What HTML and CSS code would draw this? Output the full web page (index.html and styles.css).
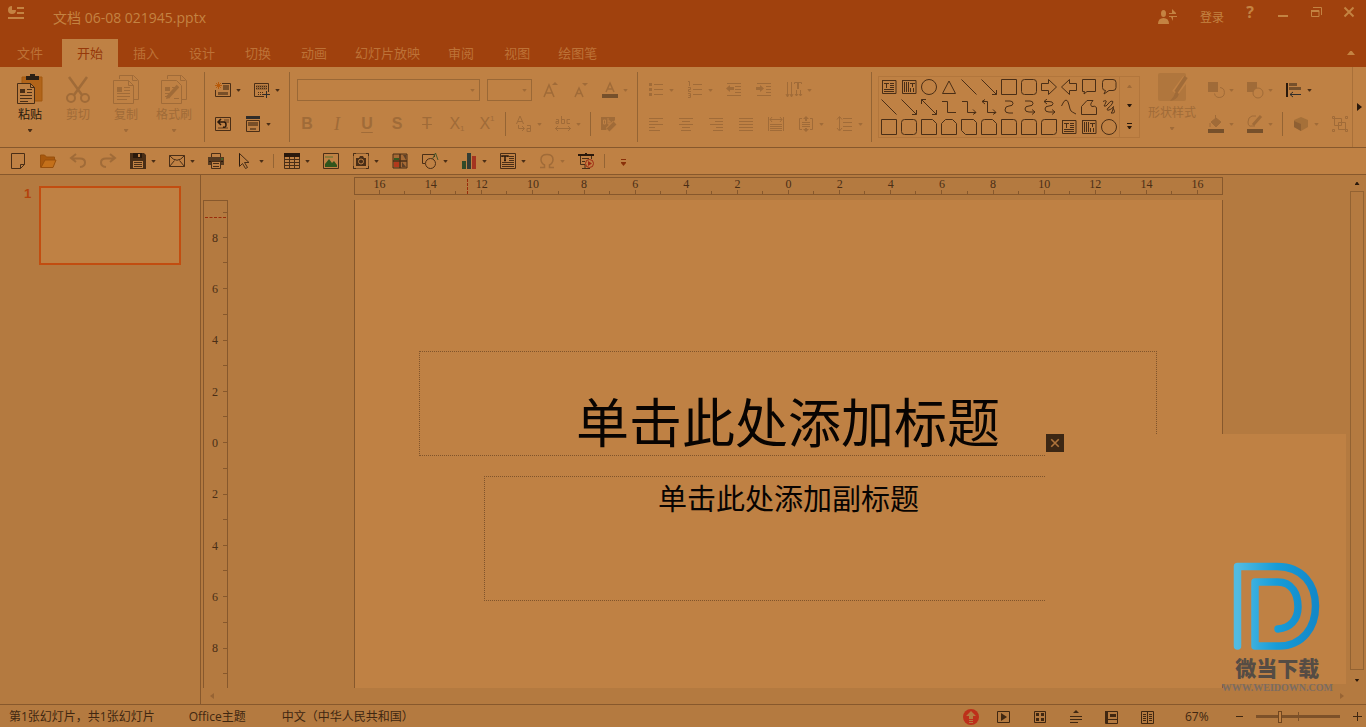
FILE: index.html
```html
<!DOCTYPE html>
<html lang="zh-CN">
<head>
<meta charset="utf-8">
<title>文档 06-08 021945.pptx</title>
<meta name="viewport" content="width=device-width, initial-scale=1">
<link rel="stylesheet" href="styles.css">
</head>
<body>
<svg class="sprite" aria-hidden="true">
  <defs>
    <linearGradient id="brand" x1="0" x2="1" y1="0" y2="0"><stop offset="0" stop-color="#52bbe2"/><stop offset=".5" stop-color="#169cd8"/><stop offset="1" stop-color="#1388c8"/></linearGradient>
  </defs>
  <g>
    <!-- clipboard -->
    <symbol id="paste" viewBox="0 0 28 32"><path d="M6 3h20v24H6z" fill="#b26419" stroke="#a3590f"/><path d="M10 2h4V0h5v2h4v4H10z" fill="#2c2015" stroke="none"/><path d="M1.500 9.500h13l4 4v16h-17z" fill="#bf8144"/><path d="M14.500 9.500v4h4" /><path d="M4 15h5v4H4z" fill="currentColor" stroke="none"/><path d="M11 15.500h5M11 18.500h5M4 21.500h12M4 24.500h12M4 27.500h8"/></symbol>
    <symbol id="cut" viewBox="0 0 28 32"><path d="M5 3l13 18M23 3L10 21" stroke-width="2.500"/><circle cx="7" cy="24" r="4" stroke-width="2"/><circle cx="21" cy="24" r="4" stroke-width="2"/></symbol>
    <symbol id="copy" viewBox="0 0 28 32"><path d="M7.500 5V1.500h14l5 5v19H22M20.500 1.500v5h5"/><path d="M1.500 6.500h15l5 5v18h-20zM16.500 6.500v5h5"/><path d="M5 13h5v5H5z" fill="currentColor" stroke="none"/><path d="M12 13.500h6M12 16.500h6M5 19.500h13M5 22.500h13M5 25.500h10"/></symbol>
    <symbol id="brush" viewBox="0 0 28 32"><path d="M7.500 5V1.500h14l5 5v19H22M20.500 1.500v5h5"/><path d="M1.500 6.500h15l5 5v18h-20z"/><path d="M5 13h5v4H5z" fill="currentColor" stroke="none"/><path d="M5 19.500h4M5 22.500h4M14 24.500h5M12 13.500h3"/><path d="M18 12L8 23" stroke-width="3.500"/><path d="M6 25l1-4 3 3z" fill="currentColor" stroke="none"/></symbol>
    <!-- slides -->
    <symbol id="newslide" viewBox="0 0 18 18"><path d="M8 2.500h8.500v13h-15V9"/><path d="M9 4h6v5H9zM4 11h10v3H4z" fill="currentColor" stroke="none" opacity=".6"/><path d="M4.500 1v7M1 4.500h7M2 2l5 5M7 2L2 7" stroke="#b85a0a"/></symbol>
    <symbol id="layout" viewBox="0 0 18 18"><path d="M11 15.500H1.500v-13h14V11"/><path d="M3 5.500h11M3 7.500h11" stroke-dasharray="1 1"/><path d="M5 11.500h5M5 13.500h5" stroke-dasharray="1 1"/><path d="M3 4h11v5H3z" fill="currentColor" stroke="none" opacity=".3"/><path d="M13.500 10v7M10 13.500h7" stroke="#302d2a"/></symbol>
    <symbol id="reset" viewBox="0 0 18 18"><path d="M1.500 2.500h15v13h-15z"/><path d="M10 4h5v4h-5zM4 12h10v2H4z" fill="currentColor" stroke="none" opacity=".4"/><path d="M7 4L4 7l3 3M4 7h6q2 0 2 3t-3 2" stroke="#2a190c" stroke-width="1.500"/></symbol>
    <symbol id="section" viewBox="0 0 18 18"><path d="M2 1h14v3H2z" fill="#302d2a" stroke="none"/><path d="M2.500 5.500h13v11h-13z"/><path d="M4 7h10v4H4zM6 13h6v2H6z" fill="currentColor" stroke="none" opacity=".6"/></symbol>
    <!-- font -->
    <symbol id="grow" viewBox="0 0 18 18"><path d="M3 16L8 4l5 12M5 12h6" stroke-width="1.500"/><path d="M11 4l3-3 3 3z" fill="currentColor" stroke="none"/></symbol>
    <symbol id="shrink" viewBox="0 0 18 18"><path d="M4 16l4-9 4 9M5.500 12.500h5" stroke-width="1.500"/><path d="M11 2l3 3 3-3z" fill="currentColor" stroke="none"/></symbol>
    <symbol id="color" viewBox="0 0 18 18"><path d="M5 11l4-9 4 9M6.500 8h5" stroke-width="1.500"/><path d="M1 13h16v4H1z" fill="#76502b" stroke="none"/></symbol>
    <symbol id="case" viewBox="0 0 18 18"><path d="M1.500 9L5 1l3.500 8M3 6.500h4M3.500 10v3.500H9M7 11l2.500 2.500L7 16"/><path d="M12 10.500h3.500v6H12v-3h3.500"/></symbol>
    <symbol id="clear" viewBox="0 0 18 18"><path d="M1 2h14v3l-9 10H1z" fill="currentColor" stroke="none"/><path d="M3.500 5h2v4h-2zM8 3v6h2V6H8" stroke="#bf8144"/><path d="M15 8L8 15" stroke="#bf8144" stroke-width="6"/><path d="M15 8L8 15" stroke-width="4"/></symbol>
    <symbol id="spacing" viewBox="0 0 18 18"><path d="M2 4.500h2.500v4H2v-2h2.500M7.500 1v7.500h3v-4h-3M16 4.500h-3v4h3M1 13.500h16M4 11l-2.500 2.500L4 16M14 11l2.500 2.500L14 16"/></symbol>
    <!-- paragraph -->
    <symbol id="bullets" viewBox="0 0 18 18"><path d="M7 3.500h9M7 8.500h9M7 13.500h9"/><path d="M2 2h3v3H2zM2 7h3v3H2zM2 12h3v3H2z" fill="currentColor" stroke="none"/></symbol>
    <symbol id="numbers" viewBox="0 0 18 18"><path d="M7 3.500h9M7 8.500h9M7 13.500h9M2 .500h1.500V5M2 6.500h2.500v2H2.500v2H5M2 12.500h2.500v4H2M2.500 14.500h2"/></symbol>
    <symbol id="outdent" viewBox="0 0 18 18"><path d="M2 2.500h14M10 5.500h6M10 8.500h6M10 11.500h6M2 14.500h14"/><path d="M1 7.500L5 4v2h4v3H5v2z" fill="currentColor" stroke="none"/></symbol>
    <symbol id="indent" viewBox="0 0 18 18"><path d="M2 2.500h14M11 5.500h5M11 8.500h5M11 11.500h5M2 14.500h14"/><path d="M9 7.500L5 4v2H1v3h4v2z" fill="currentColor" stroke="none"/></symbol>
    <symbol id="direction" viewBox="0 0 18 18"><path d="M2.500 1v14M6.500 1v14M1 13l1.500 3L4 13M5 13l1.500 3L8 13M9.500 3V1.500h7V3M11.500 9v6M15.500 9v6M10 13l1.500 2 1.500-2M14 13l1.500 2 1.500-2"/><path d="M13 1v7" stroke-width="2"/></symbol>
    <symbol id="aleft" viewBox="0 0 18 18"><path d="M2 3.500h14M2 6.500h9M2 9.500h14M2 12.500h6M2 15.500h11"/></symbol>
    <symbol id="acenter" viewBox="0 0 18 18"><path d="M2 3.500h14M5 6.500h8M2 9.500h14M5 12.500h8M4 15.500h10"/></symbol>
    <symbol id="aright" viewBox="0 0 18 18"><path d="M2 3.500h14M8 6.500h8M3 9.500h13M9 12.500h7M6 15.500h10"/></symbol>
    <symbol id="ajust" viewBox="0 0 18 18"><path d="M2 3.500h14M2 6.500h14M2 9.500h14M2 12.500h14M2 15.500h14"/></symbol>
    <symbol id="adist" viewBox="0 0 18 18"><path d="M1.500 2v14M16.500 2v14M3 4.500h12M5 2L3 4.500 5 7M13 2l2 2.500L13 7M3 9.500h12M3 11.500h12M3 13.500h12M3 15.500h12"/></symbol>
    <symbol id="valign" viewBox="0 0 18 18"><path d="M5 3.500H2.500v11H5M13 3.500h2.500v11H13M5 7.500h8M5 9.500h8M5 11.500h8"/><path d="M9 1L6 4h2v2h2V4h2zM9 17l-3-3h2v-1h2v1h2z" fill="currentColor" stroke="none"/></symbol>
    <symbol id="linesp" viewBox="0 0 18 18"><path d="M3.500 2v13M1 4.500l2.500-3 2.500 3M1 13l2.500 3L6 13M7 3.500h9M7 7.500h9M7 11.500h9M7 15.500h9"/></symbol>
    <!-- shapes -->
    <symbol id="s-text" viewBox="0 0 16 16"><path d="M1 1.500h14v13H1.500v-13M3 4.500h5M5.500 4v5M9 4.500h4M9 6.500h4M9 8.500h4M3 10.500h10M3 12.500h10"/></symbol>
    <symbol id="s-vtext" viewBox="0 0 16 16"><path d="M1 1.500h14v13H1.500v-13M3.500 3v10M5.500 3v10M7.500 3v10M9 4.500h5M11.500 4v4M9.500 9v4M12.500 9v4"/></symbol>
    <symbol id="s-circle" viewBox="0 0 16 16"><circle cx="8" cy="8" r="7.500"/></symbol>
    <symbol id="s-tri" viewBox="0 0 16 16"><path d="M8 2l6.500 12.500h-13z"/></symbol>
    <symbol id="s-line" viewBox="0 0 16 16"><path d="M.500.500l15 15"/></symbol>
    <symbol id="s-arrow" viewBox="0 0 16 16"><path d="M.500.500l15 15M11 15.500h4.500V11"/></symbol>
    <symbol id="s-darrow" viewBox="0 0 16 16"><path d="M.500.500l15 15M11 15.500h4.500V11M.500 5V.500H5"/></symbol>
    <symbol id="s-rect" viewBox="0 0 16 16"><path d="M.500.500h15v15H.500z"/></symbol>
    <symbol id="s-round" viewBox="0 0 16 16"><rect x=".5" y=".5" width="15" height="15" rx="3"/></symbol>
    <symbol id="s-right" viewBox="0 0 16 16"><path d="M.500 4.500h7v-4l8 7.500-8 7.500v-4h-7z"/></symbol>
    <symbol id="s-left" viewBox="0 0 16 16"><path d="M15.500 4.500h-7v-4L.500 8l8 7.500v-4h7z"/></symbol>
    <symbol id="s-call" viewBox="0 0 16 16"><path d="M1.500.500h13v12H6L3 15l.500-2.500h-2z"/></symbol>
    <symbol id="s-rcall" viewBox="0 0 16 16"><path d="M4 .500h8q3 0 3 3v5q0 3-3 3H8L3 15l1.500-3.500q-3 0-3-3v-5q0-3 2.500-3z"/></symbol>
    <symbol id="s-elbow" viewBox="0 0 16 16"><path d="M1 2.500h5.500v11H15"/></symbol>
    <symbol id="s-elbowa" viewBox="0 0 16 16"><path d="M1 2.500h5.500v11H15M12 10.500l3 3-3 2"/></symbol>
    <symbol id="s-elbowd" viewBox="0 0 16 16"><path d="M1 2.500h5.500v11H15M12 10.500l3 3-3 2M4 .500l-3 2 3 2.500"/></symbol>
    <symbol id="s-curve" viewBox="0 0 16 16"><path d="M4 2h5q3 0 3 2.500Q12 7 8 7T4 11q0 3 4 3h4"/></symbol>
    <symbol id="s-curvea" viewBox="0 0 16 16"><path d="M4 2h5q3 0 3 2.500Q12 7 8 7T4 10q0 3 4 3h6M11 10.500l3 2.500-3 2.500"/></symbol>
    <symbol id="s-curved" viewBox="0 0 16 16"><path d="M3 2.500h5q4 0 4 2Q12 7 8 7T4 10q0 3 4 3h6M11 10.500l3 2.500-3 2.500M6 0L3 2.500 6 5"/></symbol>
    <symbol id="s-wave" viewBox="0 0 16 16"><path d="M.500 7Q3 1 5 1t3 5 2 6 5 3"/></symbol>
    <symbol id="s-free" viewBox="0 0 16 16"><path d="M.500 15.500v-8L6 1.500h6Q8 6 11 7.500q3-1 4.500 1v7z"/></symbol>
    <symbol id="s-scrib" viewBox="0 0 16 16"><path d="M2 2.500q4-2 3 .500T3 7q2 1 4-2t4-3 0 3-4 4q-2 3 1 2t4-3 0 2-2 4 2 0 0-5"/></symbol>
    <symbol id="s-snip" viewBox="0 0 16 16"><path d="M.500.500h11l4 4v11H.500z"/></symbol>
    <symbol id="s-snip2" viewBox="0 0 16 16"><path d="M4.500.500h7l4 4v11H.500v-11z"/></symbol>
    <symbol id="s-diag" viewBox="0 0 16 16"><path d="M.500.500h12l3 3v12h-11l-4-4z"/></symbol>
    <symbol id="s-rsnip" viewBox="0 0 16 16"><path d="M3.500.500h8l4 4v11H.500v-12q0-3 3-3z"/></symbol>
    <symbol id="s-r1" viewBox="0 0 16 16"><path d="M.500.500h12q3 0 3 3v12H.500z"/></symbol>
    <symbol id="s-r2" viewBox="0 0 16 16"><path d="M3.500.500h9q3 0 3 3v12H.500v-12q0-3 3-3z"/></symbol>
    <symbol id="s-rd" viewBox="0 0 16 16"><path d="M3.500.500h12v12q0 3-3 3H.500v-12q0-3 3-3z"/></symbol>
    <!-- drawing -->
    <symbol id="style" viewBox="0 0 32 32"><rect x="2" y="1" width="28" height="28" rx="2" fill="#b0763d" stroke="none"/><path d="M30 6L19 21" stroke="#bf8144" stroke-width="7"/><path d="M30 5L20 20" stroke-width="4"/><path d="M20 19l3 3q-2 6-9 7 4-4 6-10z" fill="currentColor" stroke="none"/></symbol>
    <symbol id="union" viewBox="0 0 18 18"><path d="M1 1h10v10H1z" fill="currentColor" stroke="none"/><path d="M13 6.500a5 5 0 1 1-5.500 6"/></symbol>
    <symbol id="combine" viewBox="0 0 18 18"><path d="M1 1h10v10H1z" fill="currentColor" stroke="none"/><circle cx="12" cy="12" r="5" fill="#bf8144"/></symbol>
    <symbol id="align" viewBox="0 0 18 18"><path d="M4 2h8v3H4zM4 6h12v3H4z" fill="#76502b" stroke="none"/><path d="M2 2v14" stroke="#2a190c" stroke-width="2"/><path d="M5 13.500h11M8 11l-3 2.500L8 16" stroke="#302d2a"/></symbol>
    <symbol id="fill" viewBox="0 0 18 18"><path d="M4 7l5-4 5 4-5 5z" fill="currentColor"/><path d="M8.500 0v6M3 8v4" /><path d="M1 14h16v4H1z" fill="#76502b" stroke="none"/></symbol>
    <symbol id="outline" viewBox="0 0 18 18"><path d="M10 1H6Q2 2 2 7t4 4h3"/><path d="M15 1L7 10" stroke-width="3"/><path d="M1 14h16v4H1z" fill="#76502b" stroke="none"/></symbol>
    <symbol id="cube" viewBox="0 0 18 18"><path d="M2 5l7-3 7 3v7l-7 4-7-4z" fill="#a57039" stroke="none"/><path d="M2 6l7 3v7l-7-4z" fill="#8f6033" stroke="none"/></symbol>
    <symbol id="group" viewBox="0 0 18 18"><path d="M1.500 1.500h2v2h-2zM14.500 1.500h2v2h-2zM1.500 14.500h2v2h-2zM14.500 14.500h2v2h-2zM3.500 3.500h7v7h-7zM7.500 7.500h7v7h-7z"/></symbol>
    <!-- quick access -->
    <symbol id="new" viewBox="0 0 18 18"><path d="M2.500 1.500h13v11l-4 4h-9zM11.500 16.500v-4h4"/></symbol>
    <symbol id="open" viewBox="0 0 18 18"><path d="M1.500 15.500V3h4l2 2h8v3" fill="#a9590e" stroke="#99500c"/><path d="M2 15.500L6 8h11l-3 7.500z" fill="#c4701a" stroke="#99500c"/></symbol>
    <symbol id="undo" viewBox="0 0 18 18"><path d="M7 2L2 6l5 4M2 6.500h9q5 0 5 4T11 15" stroke-width="2"/></symbol>
    <symbol id="redo" viewBox="0 0 18 18"><path d="M11 2l5 4-5 4M16 6.500H7q-5 0-5 4T7 15" stroke-width="2"/></symbol>
    <symbol id="save" viewBox="0 0 18 18"><path d="M1 1h14l2 2v14H1z" fill="#4a2e16" stroke="none"/><path d="M4 1h9v5H4z" fill="#2a190c" stroke="none"/><path d="M9 2h2v3H9zM4 9h10v7H4z" fill="#bf8144" stroke="none"/><path d="M5 10.500h8M5 12.500h8M5 14.500h8"/></symbol>
    <symbol id="mail" viewBox="0 0 18 18"><path d="M1.500 3.500h15v11h-15zM1.500 3.500Q9 13 16.500 3.500M1.500 14.500l5-6M16.500 14.500l-5-6"/></symbol>
    <symbol id="print" viewBox="0 0 18 18"><path d="M4.500 5V1.500h9V5"/><path d="M1 5h16v8H1z" fill="#563a20" stroke="none"/><path d="M2 9h14v1H2z" fill="#2a190c" stroke="none"/><path d="M14 6h2v2h-2z" fill="#446024" stroke="none"/><path d="M4.500 9.500h9v7h-9z" fill="#bf8144"/><path d="M6 11.500h6M6 14.500h6"/></symbol>
    <symbol id="cursor" viewBox="0 0 18 18"><path d="M2.500 1.500v13l3-3 3 5 2-1-3-5h4.500z"/><path d="M2.500 1.500v12" stroke="#2a190c"/></symbol>
    <symbol id="table" viewBox="0 0 18 18"><path d="M1.500 1.500h15v15h-15zM6.500 4v12M11.500 4v12M2 7.500h14M2 10.500h14M2 13.500h14"/><path d="M1 1h16v4H1z" fill="#2a190c" stroke="none"/></symbol>
    <symbol id="picture" viewBox="0 0 18 18"><path d="M1.500 1.500h15v15h-15z"/><path d="M3 4h8v2H3z" fill="#8b7a3a" stroke="none"/><path d="M3 15v-3l4-5 3 4 2-2 3 4v2z" fill="#30551c" stroke="none"/></symbol>
    <symbol id="camera" viewBox="0 0 18 18"><path d="M1.500 1.500h15v15h-15z" stroke-dasharray="1 1"/><path d="M1.500 4V1.500H4M14 1.500h2.500V4M16.500 14v2.500H14M4 16.500H1.500V14"/><path d="M4 6h3l1-2h3l1 2h2v8H4z" fill="currentColor" stroke="none"/><circle cx="9" cy="9.500" r="2.500" stroke="#bf8144"/></symbol>
    <symbol id="gallery" viewBox="0 0 18 18"><path d="M2 2h14v14H2z" fill="#a66a35"/><path d="M3 6h5v2H3z" fill="#365a20" stroke="none"/><path d="M3 10h5v5H3z" fill="#b33a1c" stroke="none"/><path d="M11 10l4 5h-4zM12 3h3v5z" fill="#5f4027" stroke="none"/><path d="M9 2v14M2 9h14" stroke-width="1.500"/></symbol>
    <symbol id="shapes" viewBox="0 0 18 18"><path d="M4 11.500H1.500v-9h12V5" /><path d="M11 8l3.500-7L17 8" stroke="#45562a"/><circle cx="9.500" cy="11.500" r="5" fill="#bf8144"/></symbol>
    <symbol id="chart" viewBox="0 0 18 18"><path d="M2 9h4v8H2z" fill="#324a28" stroke="none"/><path d="M7 1h4v16H7z" fill="#343e35" stroke="none"/><path d="M12 4h4v13h-4z" fill="#a43420" stroke="none"/></symbol>
    <symbol id="textbox" viewBox="0 0 18 18"><path d="M1.500 1.500h15v15h-15zM10 4.500h5M10 6.500h5M10 8.500h5M3 10.500h12M3 12.500h12M3 14.500h12"/><path d="M3 5V4h6v1M6 4v5M5 8.500h2" stroke="#2a190c" stroke-width="1.500"/></symbol>
    <symbol id="omega" viewBox="0 0 18 18"><path d="M2 15.500h4.500V13Q3 11 3 7.500 3 2.500 9 2.500t6 5Q15 11 11.500 13v2.500H16" stroke-width="1.500"/></symbol>
    <symbol id="present" viewBox="0 0 18 18"><path d="M1 2h16v2H1zM8 1h2v1H8z" fill="#2a190c" stroke="none"/><path d="M3.500 4v8.500H8M14.500 4v3M5 6.500h7M5 9.500h3M8 13v3M5 16.500h8"/><circle cx="12.500" cy="11.500" r="4" stroke="#a02a12"/><path d="M11 9l4 2.500-4 2.500z" fill="#a02a12" stroke="none"/></symbol>
    <symbol id="more" viewBox="0 0 18 18"><path d="M7 7.500h5" stroke="#8a3008"/><path d="M7 10h5v1l-2.500 3L7 11z" fill="#8a3008" stroke="none"/></symbol>
    <!-- title bar -->
    <symbol id="applogo" viewBox="0 0 18 18"><path d="M5 1a4 4 0 1 0 4 4H5z" fill="currentColor" stroke="none"/><path d="M10 3h7M10 8h7M1 13h16" stroke-width="2"/></symbol>
    <symbol id="users" viewBox="0 0 20 18"><ellipse cx="6.500" cy="5.500" rx="2.500" ry="3.500" fill="currentColor" stroke="none"/><path d="M1 16q0-6 5.500-6t5.500 6z" fill="currentColor" stroke="none"/><path d="M12 5h3V1l4 4v1h-7zM20 8h-8v1h2l2 4V9h4z" fill="currentColor" stroke="none"/></symbol>
    <symbol id="min" viewBox="0 0 12 12"><path d="M1 10h10" stroke-width="2"/></symbol>
    <symbol id="restore" viewBox="0 0 12 12"><path d="M3 1.500h8.500V9M1 4.500h8v6H1.500V4M1 5.500h8"/></symbol>
    <symbol id="close" viewBox="0 0 12 12"><path d="M1.500 1.500l9 9M10.500 1.500l-9 9" stroke-width="2"/></symbol>
    <!-- status bar -->
    <symbol id="update" viewBox="0 0 18 18"><circle cx="9" cy="9" r="8" fill="#bd301a" stroke="none"/><path d="M9 3l5 5h-3v3H7V8H4zM7 12h4v1H7zM7 14h4v1H7z" fill="#b47a40" stroke="none"/></symbol>
    <symbol id="play" viewBox="0 0 18 18"><path d="M2.500 3.500h12v11h-12z"/><path d="M6 5l6 4-6 4z" fill="currentColor" stroke="none"/></symbol>
    <symbol id="grid" viewBox="0 0 18 18"><path d="M3.500 3.500h11v11h-11z"/><path d="M5 5h3v3H5zM10 5h3v3h-3zM5 10h3v3H5zM10 10h3v3h-3z" fill="currentColor" stroke="none"/></symbol>
    <symbol id="notes" viewBox="0 0 18 18"><path d="M9 2l3 3H6z" fill="currentColor" stroke="none"/><path d="M3 8.500h12M3 11.500h12M3 14.500h8"/></symbol>
    <symbol id="normal" viewBox="0 0 18 18"><path d="M2.500 3.500h12v12h-12zM5 11.500h9"/><path d="M2 3h3v12H2zM7 6h6v3H7z" fill="currentColor" stroke="none"/></symbol>
    <symbol id="read" viewBox="0 0 18 18"><path d="M2.500 3.500h12v12h-12zM8.500 3v12M4 6.500h3M4 8.500h3M4 10.500h3M4 12.500h3M10 6.500h3M10 8.500h3M10 10.500h3M10 12.500h3"/></symbol>
  </g>
</svg>

<div class="app">
  <header class="titlebar">
    <svg class="ico"><use href="#applogo"/></svg>
    <h1 class="doc-title">文档 06-08 021945.pptx</h1>
    <div class="account">
      <button aria-label="切换用户"><svg class="ico wide"><use href="#users"/></svg></button>
      <button class="login">登录</button>
    </div>
    <div class="window-controls">
      <button class="help" aria-label="帮助">?</button>
      <button aria-label="最小化"><svg class="ctl"><use href="#min"/></svg></button>
      <button aria-label="还原"><svg class="ctl"><use href="#restore"/></svg></button>
      <button aria-label="关闭"><svg class="ctl"><use href="#close"/></svg></button>
    </div>
  </header>

  <nav class="tabs">
    <button class="tab file">文件</button>
    <button class="tab active">开始</button>
    <button class="tab">插入</button>
    <button class="tab">设计</button>
    <button class="tab">切换</button>
    <button class="tab">动画</button>
    <button class="tab long">幻灯片放映</button>
    <button class="tab">审阅</button>
    <button class="tab">视图</button>
    <button class="tab long">绘图笔</button>
    <button class="collapse" aria-label="折叠功能区"><i class="caret up"></i></button>
  </nav>

  <section class="ribbon">
    <div class="group clipboard">
      <button class="big on"><svg><use href="#paste"/></svg><span>粘贴</span><i class="caret"></i></button>
      <button class="big"><svg><use href="#cut"/></svg><span>剪切</span></button>
      <button class="big"><svg><use href="#copy"/></svg><span>复制</span><i class="caret"></i></button>
      <button class="big"><svg><use href="#brush"/></svg><span>格式刷</span><i class="caret"></i></button>
    </div>
    <div class="group rows on">
      <div class="row">
        <button class="tool" aria-label="新建幻灯片"><svg class="ico"><use href="#newslide"/></svg><i class="caret"></i></button>
        <button class="tool" aria-label="版式"><svg class="ico"><use href="#layout"/></svg><i class="caret"></i></button>
      </div>
      <div class="row">
        <button class="tool" aria-label="重置"><svg class="ico"><use href="#reset"/></svg></button>
        <button class="tool" aria-label="节"><svg class="ico"><use href="#section"/></svg><i class="caret"></i></button>
      </div>
    </div>
    <div class="group rows font">
      <div class="row">
        <div class="combos">
          <button class="combo face" aria-label="字体"><i class="caret"></i></button>
          <button class="combo size" aria-label="字号"><i class="caret"></i></button>
        </div>
        <button class="tool" aria-label="增大字号"><svg class="ico"><use href="#grow"/></svg></button>
        <button class="tool" aria-label="减小字号"><svg class="ico"><use href="#shrink"/></svg></button>
        <button class="tool" aria-label="字体颜色"><svg class="ico"><use href="#color"/></svg><i class="caret"></i></button>
      </div>
      <div class="row">
        <button class="tool glyph b">B</button>
        <button class="tool glyph i">I</button>
        <button class="tool glyph u">U</button>
        <button class="tool glyph b">S</button>
        <button class="tool glyph s">T</button>
        <button class="tool glyph">X<sub>1</sub></button>
        <button class="tool glyph">X<sup>1</sup></button>
        <i class="sep"></i>
        <button class="tool" aria-label="更改大小写"><svg class="ico"><use href="#case"/></svg><i class="caret"></i></button>
        <button class="tool" aria-label="字符间距"><svg class="ico"><use href="#spacing"/></svg><i class="caret"></i></button>
        <i class="sep"></i>
        <button class="tool" aria-label="清除格式"><svg class="ico"><use href="#clear"/></svg></button>
      </div>
    </div>
    <div class="group rows para">
      <div class="row">
        <button class="tool" aria-label="项目符号"><svg class="ico"><use href="#bullets"/></svg><i class="caret"></i></button>
        <button class="tool" aria-label="编号"><svg class="ico"><use href="#numbers"/></svg><i class="caret"></i></button>
        <button class="tool" aria-label="减少缩进"><svg class="ico"><use href="#outdent"/></svg></button>
        <button class="tool" aria-label="增加缩进"><svg class="ico"><use href="#indent"/></svg></button>
        <button class="tool" aria-label="文字方向"><svg class="ico"><use href="#direction"/></svg><i class="caret"></i></button>
      </div>
      <div class="row">
        <button class="tool" aria-label="左对齐"><svg class="ico"><use href="#aleft"/></svg></button>
        <button class="tool" aria-label="居中"><svg class="ico"><use href="#acenter"/></svg></button>
        <button class="tool" aria-label="右对齐"><svg class="ico"><use href="#aright"/></svg></button>
        <button class="tool" aria-label="两端对齐"><svg class="ico"><use href="#ajust"/></svg></button>
        <button class="tool" aria-label="分散对齐"><svg class="ico"><use href="#adist"/></svg></button>
        <button class="tool" aria-label="垂直对齐"><svg class="ico"><use href="#valign"/></svg><i class="caret"></i></button>
        <button class="tool" aria-label="行距"><svg class="ico"><use href="#linesp"/></svg><i class="caret"></i></button>
      </div>
    </div>
    <div class="group drawing">
      <div class="gallery">
        <div class="shapes">
          <button aria-label="文本框"><svg><use href="#s-text"/></svg></button><button aria-label="竖排文本框"><svg><use href="#s-vtext"/></svg></button><button aria-label="椭圆"><svg><use href="#s-circle"/></svg></button><button aria-label="三角形"><svg><use href="#s-tri"/></svg></button><button aria-label="直线"><svg><use href="#s-line"/></svg></button><button aria-label="箭头"><svg><use href="#s-arrow"/></svg></button><button aria-label="矩形"><svg><use href="#s-rect"/></svg></button><button aria-label="圆角矩形"><svg><use href="#s-round"/></svg></button><button aria-label="右箭头"><svg><use href="#s-right"/></svg></button><button aria-label="左箭头"><svg><use href="#s-left"/></svg></button><button aria-label="矩形标注"><svg><use href="#s-call"/></svg></button><button aria-label="圆角标注"><svg><use href="#s-rcall"/></svg></button>
          <button aria-label="直线"><svg><use href="#s-line"/></svg></button><button aria-label="箭头"><svg><use href="#s-arrow"/></svg></button><button aria-label="双箭头"><svg><use href="#s-darrow"/></svg></button><button aria-label="肘形"><svg><use href="#s-elbow"/></svg></button><button aria-label="肘形箭头"><svg><use href="#s-elbowa"/></svg></button><button aria-label="肘形双箭头"><svg><use href="#s-elbowd"/></svg></button><button aria-label="曲线连接"><svg><use href="#s-curve"/></svg></button><button aria-label="曲线箭头"><svg><use href="#s-curvea"/></svg></button><button aria-label="曲线双箭头"><svg><use href="#s-curved"/></svg></button><button aria-label="曲线"><svg><use href="#s-wave"/></svg></button><button aria-label="任意多边形"><svg><use href="#s-free"/></svg></button><button aria-label="自由曲线"><svg><use href="#s-scrib"/></svg></button>
          <button aria-label="矩形"><svg><use href="#s-rect"/></svg></button><button aria-label="圆角矩形"><svg><use href="#s-round"/></svg></button><button aria-label="剪单角"><svg><use href="#s-snip"/></svg></button><button aria-label="剪同侧角"><svg><use href="#s-snip2"/></svg></button><button aria-label="剪对角"><svg><use href="#s-diag"/></svg></button><button aria-label="剪圆角"><svg><use href="#s-rsnip"/></svg></button><button aria-label="单圆角"><svg><use href="#s-r1"/></svg></button><button aria-label="同侧圆角"><svg><use href="#s-r2"/></svg></button><button aria-label="对角圆角"><svg><use href="#s-rd"/></svg></button><button aria-label="文本框"><svg><use href="#s-text"/></svg></button><button aria-label="竖排文本框"><svg><use href="#s-vtext"/></svg></button><button aria-label="椭圆"><svg><use href="#s-circle"/></svg></button>
        </div>
        <div class="gallery-nav">
          <button aria-label="上一行" disabled><i class="caret up"></i></button>
          <button aria-label="下一行"><i class="caret"></i></button>
          <button class="expand" aria-label="更多形状"><i class="caret"></i></button>
        </div>
      </div>
      <button class="big wide"><svg><use href="#style"/></svg><span>形状样式</span><i class="caret"></i></button>
      <div class="rows">
        <div class="row">
          <button class="tool" aria-label="合并形状"><svg class="ico"><use href="#union"/></svg><i class="caret"></i></button>
          <button class="tool" aria-label="组合形状"><svg class="ico"><use href="#combine"/></svg><i class="caret"></i></button>
          <button class="tool on" aria-label="对齐"><svg class="ico"><use href="#align"/></svg><i class="caret"></i></button>
        </div>
        <div class="row">
          <button class="tool" aria-label="填充"><svg class="ico"><use href="#fill"/></svg><i class="caret"></i></button>
          <button class="tool" aria-label="轮廓"><svg class="ico"><use href="#outline"/></svg><i class="caret"></i></button>
          <i class="sep"></i>
          <button class="tool" aria-label="三维效果"><svg class="ico"><use href="#cube"/></svg><i class="caret"></i></button>
          <button class="tool" aria-label="组合"><svg class="ico"><use href="#group"/></svg></button>
        </div>
      </div>
    </div>
    <button class="ribbon-next" aria-label="更多工具"><i class="caret right"></i></button>
  </section>

  <div class="quickbar on">
    <button class="tool" aria-label="新建"><svg class="ico"><use href="#new"/></svg></button>
    <button class="tool" aria-label="打开"><svg class="ico"><use href="#open"/></svg></button>
    <button class="tool off" aria-label="撤销"><svg class="ico"><use href="#undo"/></svg></button>
    <button class="tool off" aria-label="恢复"><svg class="ico"><use href="#redo"/></svg></button>
    <button class="tool" aria-label="保存"><svg class="ico"><use href="#save"/></svg><i class="caret"></i></button>
    <button class="tool" aria-label="邮件"><svg class="ico"><use href="#mail"/></svg><i class="caret"></i></button>
    <button class="tool" aria-label="打印"><svg class="ico"><use href="#print"/></svg></button>
    <button class="tool" aria-label="选择"><svg class="ico"><use href="#cursor"/></svg><i class="caret"></i></button>
    <i class="sep"></i>
    <button class="tool" aria-label="表格"><svg class="ico"><use href="#table"/></svg><i class="caret"></i></button>
    <button class="tool" aria-label="图片"><svg class="ico"><use href="#picture"/></svg></button>
    <button class="tool" aria-label="屏幕截图"><svg class="ico"><use href="#camera"/></svg><i class="caret"></i></button>
    <button class="tool" aria-label="图库"><svg class="ico"><use href="#gallery"/></svg></button>
    <button class="tool" aria-label="形状"><svg class="ico"><use href="#shapes"/></svg><i class="caret"></i></button>
    <button class="tool" aria-label="图表"><svg class="ico"><use href="#chart"/></svg><i class="caret"></i></button>
    <button class="tool" aria-label="文本框"><svg class="ico"><use href="#textbox"/></svg><i class="caret"></i></button>
    <button class="tool off" aria-label="符号"><svg class="ico"><use href="#omega"/></svg><i class="caret"></i></button>
    <button class="tool" aria-label="放映"><svg class="ico"><use href="#present"/></svg></button>
    <i class="sep"></i>
    <button class="tool" aria-label="自定义"><svg class="ico"><use href="#more"/></svg></button>
  </div>

  <main class="workspace">
    <aside class="thumbs">
      <span class="thumb-no">1</span>
      <button class="thumb" aria-label="幻灯片 1"></button>
    </aside>
    <div class="vruler"><div class="vscale">
      <span>8</span><span>6</span><span>4</span><span>2</span><span>0</span><span>2</span><span>4</span><span>6</span><span>8</span>
    </div><i class="vmark"></i></div>
    <div class="stage">
      <div class="hruler">
        <span>16</span><span>14</span><span>12</span><span>10</span><span>8</span><span>6</span><span>4</span><span>2</span><span>0</span><span>2</span><span>4</span><span>6</span><span>8</span><span>10</span><span>12</span><span>14</span><span>16</span>
        <i class="hmark"></i>
      </div>
      <article class="slide">
        <h2 class="slide-title">单击此处添加标题</h2>
        <p class="slide-sub">单击此处添加副标题</p>
      </article>
    </div>
    <div class="vscroll">
      <button aria-label="向上"><i class="caret up"></i></button>
      <div class="vthumb"></div>
      <button aria-label="向下"><i class="caret"></i></button>
    </div>
    <div class="hscroll">
      <button aria-label="向左"><i class="caret left"></i></button>
      <button aria-label="向右"><i class="caret right"></i></button>
    </div>
    <div class="popup">
      <button class="popup-close" aria-label="关闭"><svg><use href="#close"/></svg></button>
    </div>
    <div class="brand">
      <svg viewBox="0 0 88 90"><path d="M4.500 84V4.500H44C70 4.500 82.500 23 82.500 44S70 84 46 84H22V20h23c14 0 20 12 20 25S57 66 45 67" stroke="url(#brand)" stroke-width="7.500" stroke-linecap="round" stroke-linejoin="round"/></svg>
      <strong>微当下载</strong>
      <span>WWW.WEIDOWN.COM</span>
    </div>
  </main>

  <footer class="statusbar">
    <span class="st-page">第1张幻灯片，共1张幻灯片</span>
    <span class="st-theme">Office主题</span>
    <span class="st-lang">中文（中华人民共和国）</span>
    <div class="views">
      <button class="upd" aria-label="更新"><svg class="ico"><use href="#update"/></svg></button>
      <button aria-label="放映"><svg class="ico"><use href="#play"/></svg></button>
      <button aria-label="浏览"><svg class="ico"><use href="#grid"/></svg></button>
      <button aria-label="备注"><svg class="ico"><use href="#notes"/></svg></button>
      <button aria-label="普通"><svg class="ico"><use href="#normal"/></svg></button>
      <button aria-label="阅读"><svg class="ico"><use href="#read"/></svg></button>
    </div>
    <label class="pct" for="zoom">67%</label>
    <button class="step minus" aria-label="缩小"></button>
    <input id="zoom" class="zoom" type="range" min="0" max="100" value="28">
    <button class="step plus" aria-label="放大"></button>
  </footer>
</div>
</body>
</html>
```
FILE: styles.css
```css
:root {
  --head: #a0410d;
  --paper: #bf8144;
  --desk: #b47a40;
  --line: #87582c;
  --dim: #a06b38;
  --ink: #4a2e16;
  --dark: #2a190c;
}

* { box-sizing: border-box; }

body {
  margin: 0;
  font: 12px/16px "Open Sans", "Noto Sans CJK SC", sans-serif;
  color: var(--ink);
  background: var(--desk);
}

button {
  margin: 0;
  padding: 0;
  border: 0;
  background: none;
  color: inherit;
  font: inherit;
}

svg { display: block; flex: none; fill: none; stroke: currentColor; }

.sprite { position: absolute; width: 0; height: 0; }

.app {
  height: 100vh;
  display: flex;
  flex-direction: column;
  overflow: hidden;
}

.ico { width: 18px; height: 18px; }
.ico.wide { width: 20px; }

.caret {
  flex: none;
  width: 5px;
  height: 3px;
  background: currentColor;
  clip-path: polygon(0 0, 100% 0, 60% 100%, 40% 100%);
}
.caret.up { clip-path: polygon(40% 0, 60% 0, 100% 100%, 0 100%); }
.caret.right { width: 5px; height: 8px; clip-path: polygon(0 0, 100% 50%, 0 100%); }
.caret.left { width: 4px; height: 6px; clip-path: polygon(100% 0, 0 50%, 100% 100%); }

/* Title bar and tabs */
.titlebar {
  flex: none;
  height: 39px;
  display: flex;
  align-items: flex-start;
  padding: 5px 11px 0 7px;
  background: var(--head);
  color: #c48342;
}
.doc-title {
  margin: 4px auto 0 28px;
  font-size: 14px;
  line-height: 18px;
  font-weight: 400;
}
.account { display: flex; gap: 23px; padding: 3px 0 0; }
.login { height: 18px; padding-top: 1px; }
.window-controls { display: flex; gap: 21px; margin-left: 20px; }
.help { width: 12px; font: 700 16px/14px "Open Sans", sans-serif; }
.ctl { width: 12px; height: 12px; }

.tabs {
  flex: none;
  height: 28px;
  display: flex;
  background: var(--head);
  color: #bd7237;
}
.tab { padding: 0 15px; font-size: 13px; line-height: 28px; }
.tab.file { padding: 0 19px 0 17px; }
.tab.long { padding: 0 13px; }
.tab.active { background: var(--paper); color: #96380a; }
.collapse { margin-left: auto; padding: 0 11px; color: #c48342; }
.collapse .caret { display: block; width: 8px; height: 4px; }

/* Ribbon */
.ribbon {
  flex: none;
  height: 81px;
  display: flex;
  background: var(--paper);
  border-bottom: 1px solid var(--line);
  color: var(--dim);
}
.group {
  flex: none;
  margin: 5px 0;
  padding: 1px 9px;
  border-right: 1px solid #946434;
}
.clipboard { display: flex; padding: 0 6px; }
.rows { display: flex; flex-direction: column; }
.row { height: 34px; display: flex; align-items: center; gap: 12px; }
.on { color: var(--ink); }
.off { color: var(--dim); }

.tool { display: flex; align-items: center; gap: 4px; min-width: 18px; }

.big {
  width: 48px;
  display: flex;
  flex-direction: column;
  align-items: center;
  justify-content: flex-start;
  padding-top: 2px;
}
.big svg { width: 28px; height: 32px; }
.big span { margin-top: 1px; line-height: 16px; white-space: nowrap; }
.big .caret { margin-top: 6px; }
.big.on span { color: var(--dark); }
.big.wide { width: 64px; margin-right: 3px; padding-top: 0; }
.big.wide svg { width: 32px; }

.font { padding: 1px 9px 1px 7px; }
.font .row + .row { padding-left: 1px; }
.combos { display: flex; gap: 7px; margin-right: -3px; }
.combo {
  height: 22px;
  border: 1px solid #9a6836;
  display: flex;
  align-items: center;
  justify-content: flex-end;
  padding-right: 4px;
}
.face { width: 183px; }
.size { width: 45px; }
.sep { flex: none; width: 1px; height: 24px; margin: 0 -3px; background: #946434; }

.glyph {
  width: 18px;
  justify-content: center;
  gap: 0;
  font: 400 16px/18px "Liberation Sans", sans-serif;
}
.glyph sub, .glyph sup { font-size: 8px; line-height: 8px; }
.glyph sub { align-self: flex-end; }
.glyph sup { align-self: flex-start; }
.glyph.b, .glyph.u { font-weight: 700; }
.glyph.i { font-family: "Liberation Serif", serif; font-style: italic; font-size: 18px; }
.glyph.u { text-decoration: underline; text-underline-offset: 3px; text-decoration-thickness: 1px; }
.glyph.s { text-decoration: line-through; }

.para { padding: 1px 8px 1px 9px; }

.drawing { display: flex; padding: 0 0 0 6px; border: 0; }
.gallery {
  display: flex;
  align-self: flex-start;
  margin-top: 4px;
  border: 1px solid #b2763c;
  color: var(--ink);
}
.shapes { display: grid; grid-template-columns: repeat(12, 20px); grid-auto-rows: 20px; }
.shapes button { display: grid; place-items: center; }
.shapes svg { width: 16px; height: 16px; }
.gallery-nav { width: 20px; display: grid; border-left: 1px solid #b2763c; color: var(--dark); }
.gallery-nav button { display: grid; place-content: center; justify-items: center; gap: 2px; }
.gallery-nav button:disabled { color: var(--dim); }
.expand::before { content: ""; width: 5px; height: 1px; background: currentColor; }
.drawing > .rows { padding-top: 1px; }

.ribbon-next {
  margin-left: auto;
  width: 14px;
  flex: none;
  display: grid;
  place-items: center;
  border-left: 1px solid #a97039;
  color: var(--dark);
}

/* Quick access bar */
.quickbar {
  flex: none;
  height: 27px;
  display: flex;
  align-items: center;
  gap: 12px;
  padding: 0 9px;
  background: var(--paper);
  border-bottom: 1px solid var(--line);
}
.quickbar .sep { height: 14px; }

/* Workspace */
.workspace {
  position: relative;
  flex: 1;
  min-height: 0;
  display: grid;
  grid-template-columns: 201px 28px 1fr 17px;
  grid-template-rows: 1fr 16px;
  background: var(--desk);
}
.thumbs {
  grid-row: 1 / 3;
  display: flex;
  align-items: flex-start;
  gap: 7px;
  padding: 11px 19px 0 24px;
  border-right: 1px solid var(--line);
}
.thumb-no { width: 8px; font: 700 13px/16px "Liberation Sans", sans-serif; color: #b3430c; }
.thumb { flex: 1; aspect-ratio: 142 / 79; border: 2px solid #c24d10; background: var(--paper); }

.vruler {
  position: relative;
  margin: 25px 1px 0 2px;
  border: 1px solid var(--line);
  border-bottom: 0;
  display: flex;
  font: 12px/16px "Liberation Serif", serif;
}
.vscale { flex: 1; display: flex; flex-direction: column; padding: 11px 0 14px; background: linear-gradient(var(--line), var(--line)) 100% 11px / 4px 1px no-repeat; }
.vscale span {
  flex: 1;
  display: grid;
  align-items: center;
  padding-left: 8px;
  background:
    linear-gradient(var(--line), var(--line)) 100% 50% / 4px 1px no-repeat,
    linear-gradient(var(--line), var(--line)) 100% 100% / 4px 1px no-repeat;
}
.vmark { position: absolute; left: 1px; right: 1px; top: 16px; border-top: 1px dashed #9b2c0a; }

.stage { display: flex; flex-direction: column; width: 869px; max-width: 100%; margin-left: 125px; }
.hruler {
  position: relative;
  flex: none;
  height: 18px;
  margin: 2px 0 5px;
  display: flex;
  box-shadow: inset 0 0 0 1px var(--line);
  font: 12px/15px "Liberation Serif", serif;
  text-align: center;
}
.hruler span {
  flex: 1;
  background:
    linear-gradient(var(--line), var(--line)) 50% 100% / 1px 5px no-repeat,
    linear-gradient(var(--line), var(--line)) 100% 100% / 1px 4px no-repeat;
}
.hmark { position: absolute; left: 13%; top: 2px; bottom: 1px; border-left: 1px dashed #9b2c0a; }

.slide {
  flex: 1;
  border: solid var(--line);
  border-width: 0 1px;
  background: var(--paper);
  color: #080402;
}
.slide-title, .slide-sub { border: 1px dotted #80542b; font-weight: 400; text-align: center; font-family: "Noto Sans CJK SC", sans-serif; }
.slide-title { height: 105px; margin: 151px 65px 0 64px; padding-top: 32px; font-size: 53px; line-height: 72px; }
.slide-sub { height: 125px; margin: 20px 129px 0; font-size: 29px; line-height: 40px; }

.vscroll {
  grid-row: 1 / 3;
  grid-column: 4;
  display: flex;
  flex-direction: column;
  align-items: center;
  padding: 1px 1px 14px 0;
  color: var(--dark);
}
.vscroll button { height: 15px; display: grid; place-items: center; }
.vscroll button:last-child { height: 20px; }
.vthumb { flex: 1; width: 14px; border: 1px solid #926232; }
.hscroll {
  grid-row: 2;
  grid-column: 2 / 5;
  display: flex;
  justify-content: space-between;
  align-items: center;
  padding: 0 22px 0 9px;
  color: #976434;
}
.hscroll .caret { display: block; width: 4px; height: 6px; }

.popup { position: absolute; right: 20px; bottom: 20px; width: 300px; height: 250px; background: var(--paper); }
.popup-close { width: 18px; height: 18px; display: grid; place-items: center; background: #3c2714; color: #ad733b; }
.popup-close svg { width: 10px; height: 10px; }

.brand {
  position: absolute;
  right: 33px;
  bottom: 10px;
  display: flex;
  flex-direction: column;
  align-items: center;
  color: #554c44;
}
.brand svg { width: 88px; height: 90px; }
.brand strong { font: 900 21px/30px "Noto Sans CJK SC", sans-serif; }
.brand span { font: 700 10px/12px "Liberation Serif", serif; color: #7b6c62; }

/* Status bar */
.statusbar {
  flex: none;
  height: 23px;
  display: flex;
  align-items: center;
  border-top: 1px solid var(--line);
  padding: 1px 4px 0 9px;
  color: #402711;
  white-space: nowrap;
}
.st-theme { margin-left: 34px; }
.st-lang { margin-left: 36px; }
.views { display: flex; gap: 18px; margin-left: auto; margin-right: 28px; }
.views .upd { margin-right: -3px; }
.pct { width: 26px; margin-right: 24px; }
.step { width: 9px; height: 9px; flex: none; background: linear-gradient(currentColor, currentColor) 50% 50% / 7px 1px no-repeat; }
.plus { background: linear-gradient(currentColor, currentColor) 50% 50% / 9px 1px no-repeat, linear-gradient(currentColor, currentColor) 50% 50% / 1px 9px no-repeat; }
.zoom {
  appearance: none;
  width: 84px;
  height: 12px;
  margin: 0 13px 0 12px;
  background:
    linear-gradient(#7d5129, #7d5129) 50% 50% / 1px 9px no-repeat,
    linear-gradient(#7d5129, #7d5129) 0 50% / 100% 3px no-repeat;
}
.zoom::-webkit-slider-thumb { appearance: none; width: 4px; height: 12px; border: 1px solid #70461f; background: var(--paper); }
```
